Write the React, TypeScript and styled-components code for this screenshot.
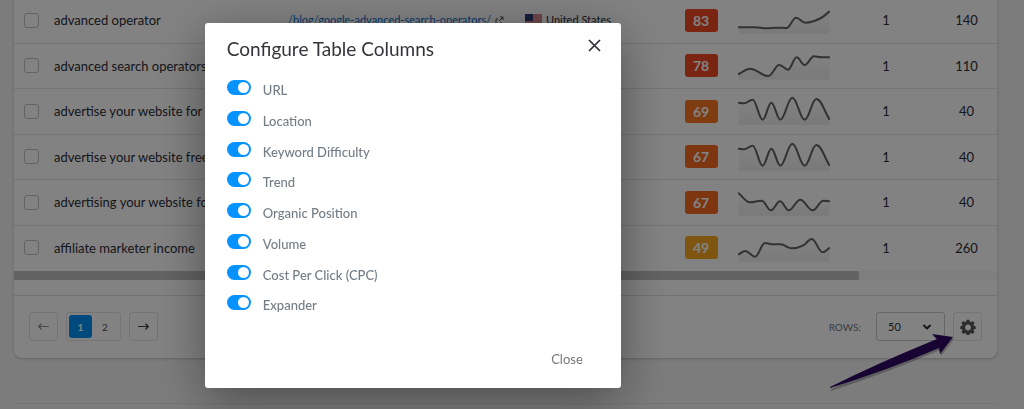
import React from "react";
import styled, { createGlobalStyle } from "styled-components";
import { ChevronDown } from "lucide-react";

const GlobalStyle = createGlobalStyle`
  * { box-sizing: border-box; }
  html, body { margin: 0; background: #f3f3f4; }
  body { font-family: Lato, Carlito, "Liberation Sans", sans-serif; font-size: 13px; line-height: 16px; color: #2b2d36; overflow: hidden; }
  button, input, select { font: inherit; color: inherit; margin: 0; }
`;

const Page = styled.main`
  padding: 0 27px 0 14px;
  margin-top: -2px;
`;

const Card = styled.section`
  background: #fff;
  border-radius: 0 0 8px 8px;
  box-shadow: 0 1px 3px rgba(0, 0, 0, 0.2);
`;

const Table = styled.table`
  width: 100%;
  height: 273px;
  table-layout: fixed;
  border-collapse: separate;
  border-spacing: 0;
`;

const Row = styled.tr`
  td { border-bottom: 1px solid #e6e6e7; }
  &:last-child td { border-color: transparent; }
`;

const Cell = styled.td<{ $center?: boolean; $small?: boolean }>`
  padding: 0;
  overflow: hidden;
  white-space: nowrap;
  vertical-align: middle;
  font-size: ${(p) => (p.$small ? 11 : 13)}px;
  text-align: ${(p) => (p.$center ? "center" : "left")};
`;

const RowCheck = styled.input`
  appearance: none;
  display: block;
  width: 15px;
  height: 15px;
  margin-left: 10px;
  border: 1px solid #c2c2c4;
  border-radius: 3px;
`;

const Place = styled.div`
  display: flex;
  align-items: center;
  gap: 4px;
`;

const UrlLink = styled.a`
  color: #0c6fd0;
  text-decoration: none;
`;

const Badge = styled.span<{ $tone: string }>`
  display: block;
  width: 33px;
  margin: 0 auto;
  border-radius: 3px;
  background: ${(p) => p.$tone};
  color: #fff;
  font-size: 14px;
  font-weight: 700;
  line-height: 23px;
  text-align: center;
`;

const Spark = styled.svg`
  display: block;
  width: 92px;
  height: 32px;
`;

const ScrollTrack = styled.div`
  height: 9px;
  background: #f7f7f7;
`;

const ScrollThumb = styled.div`
  width: 86%;
  height: 100%;
  background: #c1c1c1;
  border-radius: 0 2px 2px 0;
`;

const Footer = styled.footer`
  display: flex;
  align-items: center;
  justify-content: space-between;
  margin-top: 15px;
  padding: 16px 15px 17px;
  border-top: 1px solid #e0e0e1;
`;

const Group = styled.div`
  display: flex;
  align-items: center;
  gap: 8px;
`;

const Pager = styled.div`
  display: flex;
  padding: 2px;
  border: 1px solid #e4e4e5;
  border-radius: 3px;
`;

const PageButton = styled.button<{ $current?: boolean }>`
  width: ${(p) => (p.$current ? 23 : 26)}px;
  height: 23px;
  padding: 0;
  border: 0;
  border-radius: 3px;
  background: ${(p) => (p.$current ? "#0091f7" : "transparent")};
  color: ${(p) => (p.$current ? "#fff" : "#4f5156")};
  font-size: 10px;
  font-weight: ${(p) => (p.$current ? 700 : 400)};
`;

const SquareButton = styled.button<{ $dim?: boolean }>`
  display: flex;
  align-items: center;
  justify-content: center;
  width: 29px;
  height: 29px;
  padding: 0;
  border: 1px solid #e4e4e5;
  border-radius: 3px;
  background: transparent;
  color: ${(p) => (p.$dim ? "#8d8f93" : "#3f4146")};
`;

const RowsLabel = styled.label`
  margin-right: 7px;
  color: #747a82;
  font-size: 10px;
`;

const SelectWrap = styled.div`
  display: grid;
  align-items: center;
  width: 69px;
  > * { grid-area: 1 / 1; }
  svg { justify-self: end; margin-right: 12px; pointer-events: none; }
`;

const RowsSelect = styled.select`
  appearance: none;
  width: 100%;
  height: 29px;
  padding: 0 11px;
  border: 1px solid #cacacb;
  border-radius: 3px;
  background: transparent;
  font-size: 11px;
`;

const GearAnchor = styled.div`
  position: relative;
`;

const Pointer = styled.svg`
  position: absolute;
  z-index: 3;
  right: 26px;
  top: 19px;
  width: 128px;
  height: 62px;
  pointer-events: none;
`;

const PageRule = styled.hr`
  margin: 45px 0 0;
  border: 0;
  border-top: 1px solid #e4e4e5;
`;

const Overlay = styled.div`
  position: fixed;
  inset: 0;
  z-index: 2;
  padding: 23px 20px 0 20%;
  background: rgba(0, 0, 0, 0.49);
`;

const Dialog = styled.div`
  max-width: 416px;
  padding: 13px 20px 15px 22px;
  border-radius: 3px;
  background: #fff;
  box-shadow: 0 12px 50px rgba(0, 0, 0, 0.4);
`;

const DialogHead = styled.div`
  display: flex;
  align-items: flex-start;
  justify-content: space-between;
`;

const DialogTitle = styled.h2`
  margin: 0;
  color: #33353a;
  font-size: 19px;
  font-weight: 400;
  line-height: 26px;
`;

const IconButton = styled.button`
  display: flex;
  padding: 3px 0;
  border: 0;
  background: transparent;
  color: #2f3036;
`;

const Options = styled.ul`
  display: grid;
  grid-auto-rows: 1fr;
  height: 246px;
  margin: 11px 0 0;
  padding: 0;
  list-style: none;
`;

const Option = styled.label`
  display: flex;
  align-items: flex-start;
  gap: 12px;
  padding-top: 7px;
  color: #747d86;
  font-weight: 500;
`;

const OptionName = styled.span`
  padding-top: 2px;
`;

const Toggle = styled.input`
  appearance: none;
  flex: none;
  width: 24px;
  height: 15px;
  padding: 2px;
  border-radius: 8px;
  background: #b9c0c7;
  &::before {
    content: "";
    display: block;
    width: 11px;
    height: 11px;
    border-radius: 50%;
    background: #fff;
  }
  &:checked { background: #0793ff; }
  &:checked::before { margin-left: 9px; }
`;

const DialogFoot = styled.div`
  display: flex;
  justify-content: flex-end;
  margin-top: 26px;
  padding-right: 18px;
`;

const CloseButton = styled.button`
  padding: 6px 0;
  border: 0;
  background: transparent;
  color: #75777b;
  line-height: 16px;
`;

type Point = [number, number];

interface Keyword {
  name: string;
  url?: string;
  country?: string;
  difficulty: number;
  tone: string;
  trend: Point[];
  position: number;
  volume: number;
}

const wave: Point[] = [[2, 23], [18, 25], [44, 14], [74, 74], [100, 23], [127, 74], [163, 8], [200, 74], [235, 12], [274, 72]];

const keywords: Keyword[] = [
  { name: "advanced operator", url: "/blog/google-advanced-search-operators/", country: "United States", difficulty: 83, tone: "#f04a22", position: 1, volume: 140,
    trend: [[2, 70], [50, 70], [86, 73], [116, 71], [146, 72], [174, 41], [202, 56], [249, 42], [274, 23]] },
  { name: "advanced search operators", difficulty: 78, tone: "#f04a22", position: 1, volume: 110,
    trend: [[2, 72], [36, 56], [91, 78], [124, 45], [150, 59], [176, 22], [200, 45], [228, 19], [250, 22], [274, 22]] },
  { name: "advertise your website for", difficulty: 69, tone: "#fa7723", position: 1, volume: 40, trend: wave },
  { name: "advertise your website free", difficulty: 67, tone: "#f86a20", position: 1, volume: 40, trend: wave },
  { name: "advertising your website for", difficulty: 67, tone: "#f86a20", position: 1, volume: 40,
    trend: [[2, 22], [36, 49], [71, 44], [99, 73], [126, 46], [152, 73], [187, 41], [224, 73], [256, 44], [274, 46]] },
  { name: "affiliate marketer income", difficulty: 49, tone: "#f7a823", position: 1, volume: 260,
    trend: [[2, 67], [22, 57], [51, 74], [81, 33], [106, 37], [128, 37], [161, 49], [196, 40], [221, 21], [254, 61], [274, 48]] },
];

const columns = ["URL", "Location", "Keyword Difficulty", "Trend", "Organic Position", "Volume", "Cost Per Click (CPC)", "Expander"];

// Smooth curve whose tangent is level at every local peak and dip.
function curve(points: Point[]): string {
  const slope = points.slice(1).map((p, i) => (p[1] - points[i][1]) / (p[0] - points[i][0]));
  const tangent = points.map((_, i) => {
    if (i === 0) return slope[0];
    if (i === slope.length) return slope[i - 1];
    return slope[i - 1] * slope[i] <= 0 ? 0 : (slope[i - 1] + slope[i]) / 2;
  });
  return points.slice(1).reduce((d, [x, y], i) => {
    const [px, py] = points[i];
    const h = (x - px) / 2.6;
    return `${d}C${px + h} ${py + h * tangent[i]} ${x - h} ${y - h * tangent[i + 1]} ${x} ${y}`;
  }, `M${points[0][0]} ${points[0][1]}`);
}

function Sparkline({ points }: { points: Point[] }) {
  const line = curve(points);
  return (
    <Spark viewBox="0 0 276 96" aria-hidden="true">
      <defs>
        <linearGradient id="fade" x1="0" y1="0" x2="0" y2="1">
          <stop offset="0" stopColor="#777" stopOpacity="0" />
          <stop offset="1" stopColor="#777" stopOpacity="0.12" />
        </linearGradient>
      </defs>
      <path d={`${line}V89H2Z`} fill="url(#fade)" />
      <path d={line} fill="none" stroke="#636365" strokeWidth="6" strokeLinecap="round" strokeLinejoin="round" />
    </Spark>
  );
}

function Flag() {
  return (
    <svg width="17" height="12" viewBox="0 0 17 12" aria-hidden="true">
      <rect width="17" height="12" fill="#e8e2e4" />
      <path d="M0 1h17M0 3h17M0 5h17M0 7h17M0 9h17M0 11h17" stroke="#c8303f" />
      <rect width="8" height="7" fill="#2c3c78" />
    </svg>
  );
}

function OutLink() {
  return (
    <svg width="9" height="9" viewBox="0 0 9 9" fill="none" stroke="#44464c" aria-hidden="true">
      <path d="M5 1h3v3M8 1 4 5M3 3H1v5h5V6" />
    </svg>
  );
}

function Arrow({ back }: { back?: boolean }) {
  return (
    <svg width="11" height="7" viewBox="0 0 11 7" fill="none" stroke="currentColor" strokeWidth="1.2" strokeLinecap="round" aria-hidden="true">
      <path d={back ? "M10.4 3.5H.8M3.2 1 .7 3.5 3.2 6" : "M.6 3.5h9.6M7.8 1l2.5 2.5L7.8 6"} />
    </svg>
  );
}

function Cross() {
  return (
    <svg width="13" height="13" viewBox="0 0 13 13" fill="none" stroke="currentColor" strokeWidth="1.7" aria-hidden="true">
      <path d="M1 1l11 11M12 1 1 12" />
    </svg>
  );
}

function Gear() {
  return (
    <svg width="16" height="16" viewBox="0 0 16 16" fill="#56565a" fillRule="evenodd" aria-hidden="true">
      <path d="M6.6.8h2.8l.4 1.9 1.2.5 1.6-1.1 2 2-1.1 1.6.5 1.2 1.7.3v2.7l-1.7.4-.5 1.2 1.1 1.6-2 2-1.6-1.1-1.2.5-.4 1.7H6.6l-.4-1.7-1.2-.5-1.6 1.1-2-2 1.1-1.6L2 10.3.3 9.9V7.2L2 6.9l.5-1.2-1.1-1.6 2-2L5 3.2l1.2-.5zM8 5.6a2.9 2.9 0 1 0 0 5.8 2.9 2.9 0 0 0 0-5.8z" />
    </svg>
  );
}

export default function App() {
  return (
    <>
      <GlobalStyle />
      <Page>
        <Card>
          <Table>
            <colgroup>
              <col width="40" />
              <col width="234" />
              <col width="237" />
              <col />
              <col width="74" />
              <col width="98" />
              <col width="100" />
              <col width="61" />
            </colgroup>
            <tbody>
              {keywords.map((k) => (
                <Row key={k.name}>
                  <Cell><RowCheck type="checkbox" aria-label={k.name} /></Cell>
                  <Cell>{k.name}</Cell>
                  <Cell $small>
                    {k.url && <Place><UrlLink href={k.url}>{k.url}</UrlLink><OutLink /></Place>}
                  </Cell>
                  <Cell $small>{k.country && <Place><Flag />{k.country}</Place>}</Cell>
                  <Cell $center><Badge $tone={k.tone}>{k.difficulty}</Badge></Cell>
                  <Cell><Sparkline points={k.trend} /></Cell>
                  <Cell $center>{k.position}</Cell>
                  <Cell $center>{k.volume}</Cell>
                </Row>
              ))}
            </tbody>
          </Table>
          <ScrollTrack><ScrollThumb /></ScrollTrack>
          <Footer>
            <Group>
              <SquareButton $dim aria-label="Previous page"><Arrow back /></SquareButton>
              <Pager>
                <PageButton $current>1</PageButton>
                <PageButton>2</PageButton>
              </Pager>
              <SquareButton aria-label="Next page"><Arrow /></SquareButton>
            </Group>
            <Group>
              <RowsLabel htmlFor="rows">ROWS:</RowsLabel>
              <SelectWrap>
                <RowsSelect id="rows" defaultValue="50">
                  <option>50</option>
                </RowsSelect>
                <ChevronDown size={12} strokeWidth={4} />
              </SelectWrap>
              <GearAnchor>
                <SquareButton aria-label="Configure columns"><Gear /></SquareButton>
                <Pointer viewBox="0 0 128 62" aria-hidden="true">
                  <path d="M2 56 109 8 104 3 125 6 112 23 111 17Q60 39 2 58Z" fill="#000" opacity="0.25" transform="translate(1 2)" />
                  <path d="M2 56Q50 32 109 8L104 3 125 6 112 23 111 17Q60 39 2 57Z" fill="#180433" />
                </Pointer>
              </GearAnchor>
            </Group>
          </Footer>
        </Card>
        <PageRule />
      </Page>
      <Overlay>
        <Dialog role="dialog" aria-modal="true" aria-labelledby="dialog-title">
          <DialogHead>
            <DialogTitle id="dialog-title">Configure Table Columns</DialogTitle>
            <IconButton aria-label="Dismiss"><Cross /></IconButton>
          </DialogHead>
          <Options>
            {columns.map((c) => (
              <li key={c}>
                <Option>
                  <Toggle type="checkbox" role="switch" defaultChecked />
                  <OptionName>{c}</OptionName>
                </Option>
              </li>
            ))}
          </Options>
          <DialogFoot><CloseButton>Close</CloseButton></DialogFoot>
        </Dialog>
      </Overlay>
    </>
  );
}
